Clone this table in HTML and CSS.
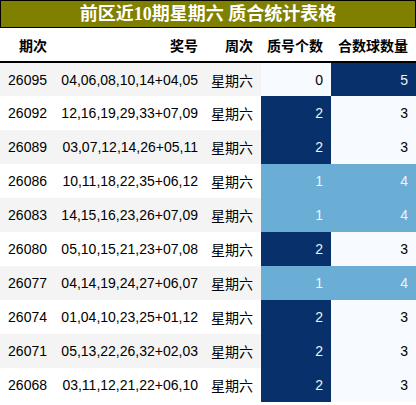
FILE: index.html
```html
<!DOCTYPE html>
<html>
<head>
    <meta charset="UTF-8">
    <title>前区近10期星期六 质合统计表格</title>
    <link rel="stylesheet" href="styles.css">
</head>
<body>
    <div class="title">前区近10期星期六 质合统计表格</div>

    <table class="stats">
        <colgroup>
            <col class="c-issue">
            <col class="c-nums">
            <col class="c-week">
            <col class="c-prime">
            <col class="c-comp">
        </colgroup>
        <thead>
            <tr>
                <th>期次</th>
                <th>奖号</th>
                <th>周次</th>
                <th>质号个数</th>
                <th>合数球数量</th>
            </tr>
        </thead>
        <tbody>
            <tr>
                <td>26095</td><td>04,06,08,10,14+04,05</td><td>星期六</td>
                <td class="lo">0</td><td class="hi">5</td>
            </tr>
            <tr>
                <td>26092</td><td>12,16,19,29,33+07,09</td><td>星期六</td>
                <td class="hi">2</td><td class="lo">3</td>
            </tr>
            <tr>
                <td>26089</td><td>03,07,12,14,26+05,11</td><td>星期六</td>
                <td class="hi">2</td><td class="lo">3</td>
            </tr>
            <tr>
                <td>26086</td><td>10,11,18,22,35+06,12</td><td>星期六</td>
                <td class="mid">1</td><td class="mid">4</td>
            </tr>
            <tr>
                <td>26083</td><td>14,15,16,23,26+07,09</td><td>星期六</td>
                <td class="mid">1</td><td class="mid">4</td>
            </tr>
            <tr>
                <td>26080</td><td>05,10,15,21,23+07,08</td><td>星期六</td>
                <td class="hi">2</td><td class="lo">3</td>
            </tr>
            <tr>
                <td>26077</td><td>04,14,19,24,27+06,07</td><td>星期六</td>
                <td class="mid">1</td><td class="mid">4</td>
            </tr>
            <tr>
                <td>26074</td><td>01,04,10,23,25+01,12</td><td>星期六</td>
                <td class="hi">2</td><td class="lo">3</td>
            </tr>
            <tr>
                <td>26071</td><td>05,13,22,26,32+02,03</td><td>星期六</td>
                <td class="hi">2</td><td class="lo">3</td>
            </tr>
            <tr>
                <td>26068</td><td>03,11,12,21,22+06,10</td><td>星期六</td>
                <td class="hi">2</td><td class="lo">3</td>
            </tr>
        </tbody>
    </table>
</body>
</html>
```

FILE: styles.css
```css
/* colours follow the Blues gradient */
:root {
    --olive: #808000;
    --stripe: #f4f4f4;
    --blue-lo: #f7fbff;
    --blue-mid: #6aaed6;
    --blue-hi: #08306b;
    --text: #000000;
}

* {
    margin: 0;
    padding: 0;
    box-sizing: border-box;
}

body {
    background: #ffffff;
    color: var(--text);
    font-family: "Liberation Sans", "Noto Sans CJK SC", sans-serif;
    font-size: 14px;
    width: 416px;
}

.title {
    background: var(--olive);
    border: 1px solid #000000;
    color: #ffffff;
    font-family: "Liberation Serif", "Noto Sans CJK SC", serif;
    font-weight: bold;
    font-size: 18px;
    height: 28px;
    line-height: 26px;
    text-align: center;
}

.stats {
    width: 416px;
    border-collapse: collapse;
    table-layout: fixed;
}

.c-issue { width: 55px; }
.c-nums { width: 151px; }
.c-week { width: 55px; }
.c-prime { width: 70px; }
.c-comp { width: 85px; }

.stats th,
.stats td {
    text-align: right;
    padding: 0 8px 0 0;
    white-space: nowrap;
}

.stats th {
    height: 34px;
    font-weight: bold;
    border-bottom: 2px solid #000000;
}

.stats td {
    height: 34px;
}

.stats tbody tr:nth-child(odd) td {
    background: var(--stripe);
}

.stats tbody tr td.lo {
    background: var(--blue-lo);
    color: #000000;
}

.stats tbody tr td.mid {
    background: var(--blue-mid);
    color: #f1f1f1;
}

.stats tbody tr td.hi {
    background: var(--blue-hi);
    color: #f1f1f1;
}
```
